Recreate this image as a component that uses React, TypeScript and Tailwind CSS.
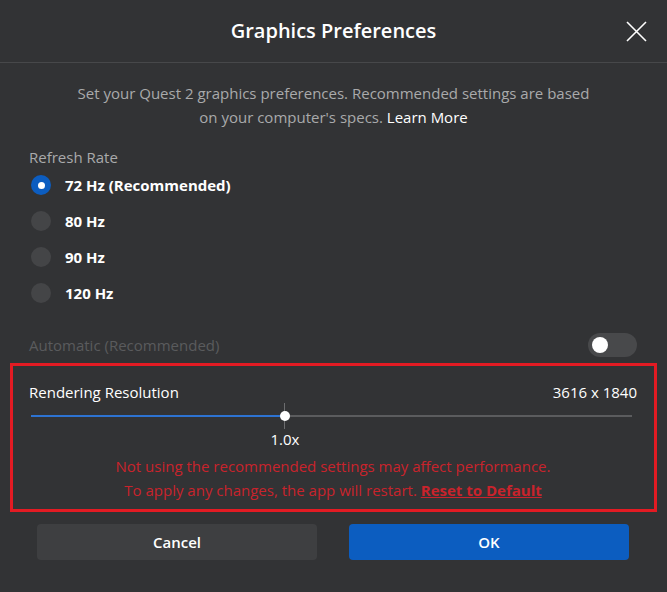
import React from "react";

const font = { fontFamily: '"Segoe UI", "Open Sans", "Noto Sans", sans-serif' };

function Radio({ label, checked }: { label: string; checked?: boolean }) {
  return (
    <div className="flex h-9 items-center">
      <div
        className={
          checked
            ? "ml-[2px] flex h-5 w-5 items-center justify-center rounded-full bg-[#0c5dc0]"
            : "ml-[2px] h-5 w-5 rounded-full bg-[#444547]"
        }
      >
        {checked && <div className="h-[7px] w-[7px] rounded-full bg-white" />}
      </div>
      <span className="ml-[14px] text-[15px] font-bold text-white">{label}</span>
    </div>
  );
}

export default function App() {
  return (
    <div className="relative h-[592px] w-[667px] bg-[#323335] text-[15px]" style={font}>
      <div className="relative flex h-[63px] items-center justify-center border-b border-[#47484a]">
        <h1 className="text-[20px] font-semibold text-white">Graphics Preferences</h1>
        <button className="absolute right-[20px] top-[21px] h-[21px] w-[21px]">
          <svg viewBox="0 0 21 21" className="h-[21px] w-[21px]">
            <path d="M1 1L20 20M20 1L1 20" stroke="white" strokeWidth="1.6" />
          </svg>
        </button>
      </div>

      <div className="px-[29px] pt-[18px]">
        <p className="text-center text-[15px] leading-[24px] text-[#a9aaab]">
          Set your Quest 2 graphics preferences. Recommended settings are based
          <br />
          on your computer's specs. <span className="text-white">Learn More</span>
        </p>
        <div className="mt-[18px] text-[15px] leading-[20px] text-[#a9aaab]">Refresh Rate</div>
        <div className="flex flex-col">
          <Radio label="72 Hz (Recommended)" checked />
          <Radio label="80 Hz" />
          <Radio label="90 Hz" />
          <Radio label="120 Hz" />
        </div>
        <div className="mt-[22px] flex h-6 items-center justify-between">
          <span className="text-[15px] text-[#5a5b5d]">Automatic (Recommended)</span>
          <div className="mr-[1px] flex h-6 w-[49px] items-center rounded-full bg-[#48494b] pl-[4px]">
            <div className="h-4 w-4 rounded-full bg-white" />
          </div>
        </div>
      </div>

      <div className="mx-[10px] mt-[6px] border-[3px] border-[#e31b23] pb-[7px] pl-[16px] pr-[17px] pt-[15px]">
        <div className="flex items-center justify-between leading-[22px] text-white">
          <span>Rendering Resolution</span>
          <span>3616 x 1840</span>
        </div>
        <div className="relative mx-[2px] h-[26px]">
          <div className="absolute left-0 right-[3px] top-[12px] h-[2px] bg-[#5b5c5e]" />
          <div className="absolute left-0 top-[12px] h-[2px] w-[254px] bg-[#2d73d2]" />
          <div className="absolute left-[253px] top-0 h-[26px] w-[1px] bg-[#6c6d6f]" />
          <div className="absolute left-[249px] top-[8px] h-[10px] w-[10px] rounded-full bg-white" />
        </div>
        <div className="relative h-[20px]">
          <span className="absolute left-[256px] top-0 -translate-x-1/2 whitespace-nowrap text-[15px] leading-[20px] text-white">
            1.0x
          </span>
        </div>
        <p className="mt-[5px] text-center text-[15px] leading-[24px] text-[#c9232c]">
          Not using the recommended settings may affect performance.
          <br />
          To apply any changes, the app will restart.{" "}
          <span className="font-bold underline">Reset to Default</span>
        </p>
      </div>

      <div className="mt-[12px] flex gap-[32px] px-[37px]">
        <button className="h-9 w-[280px] rounded-[4px] bg-[#3e3f41] text-[15px] font-semibold text-white">
          Cancel
        </button>
        <button className="h-9 w-[280px] rounded-[4px] bg-[#0c5dc0] text-[15px] font-semibold text-white">
          OK
        </button>
      </div>
    </div>
  );
}
